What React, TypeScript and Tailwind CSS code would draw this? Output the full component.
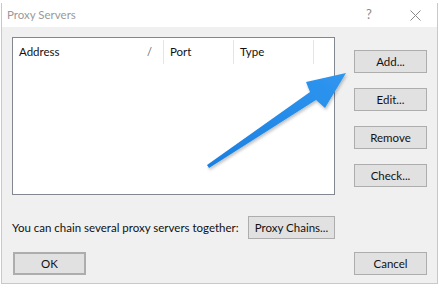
import React from "react"

const font = { fontFamily: 'Lato, "Noto Sans", sans-serif' }

const WinButton = ({
  label,
  className = "",
}: {
  label: string
  className?: string
}) => (
  <div
    className={`h-[23px] flex items-center justify-center bg-[#e1e1e1] border border-[#adadad] text-[11.5px] text-[#111] whitespace-nowrap ${className}`}
  >
    {label}
  </div>
)

const Arrow = () => (
  <svg
    className="absolute inset-0 pointer-events-none"
    width={439}
    height={288}
    viewBox="0 0 439 288"
  >
    <defs>
      <linearGradient id="arrowFill" x1="0" y1="1" x2="1" y2="0">
        <stop offset="0" stopColor="#1b7fe0" />
        <stop offset="1" stopColor="#2f96f0" />
      </linearGradient>
      <filter id="arrowShadow" x="-20%" y="-20%" width="140%" height="140%">
        <feDropShadow dx="1" dy="2" stdDeviation="1.5" floodColor="#000" floodOpacity="0.25" />
      </filter>
    </defs>
    <polygon
      points="207,165 310,92 306,82 346,73 325,108 316,100 209,168"
      fill="url(#arrowFill)"
      filter="url(#arrowShadow)"
    />
  </svg>
)

export default function App() {
  return (
    <div className="relative w-[439px] h-[288px] bg-white overflow-hidden" style={font}>
      <div className="h-[3px]" />
      <div className="mx-[1px] w-[437px] border border-t-0 border-[#c8c8c8] flex flex-col">
        {/* title bar */}
        <div className="h-[24px] bg-white flex items-center pl-[5px] text-[11.5px] text-[#9a9a9a]">
          <span className="flex-1">Proxy Servers</span>
          <span className="w-[10px] text-[13px] text-[#8a8a8a] mr-[34px]">?</span>
          <svg width="11" height="11" viewBox="0 0 11 11" className="mr-[16px]">
            <path d="M0.5 0.5 L10.5 10.5 M10.5 0.5 L0.5 10.5" stroke="#8a8a8a" strokeWidth="1" />
          </svg>
        </div>

        {/* body */}
        <div className="bg-[#f0f0f0] px-[10px] pt-[10px] pb-[8px] flex flex-col">
          <div className="flex justify-between">
            <div className="w-[323px] h-[158px] bg-white border border-[#828790]">
              <div className="flex h-[26px] pt-[2px] text-[11.5px] text-[#111]">
                <div className="w-[151px] flex items-center justify-between pl-[6px] pr-[11px] border-r border-[#e5e5e5]">
                  <span>Address</span>
                  <span className="text-[#666] text-[11px]">/</span>
                </div>
                <div className="w-[70px] flex items-center pl-[6px] border-r border-[#e5e5e5]">
                  Port
                </div>
                <div className="w-[80px] flex items-center pl-[6px] border-r border-[#e5e5e5]">
                  Type
                </div>
              </div>
            </div>
            <div className="w-[73px] pt-[13px] flex flex-col gap-[15px]">
              <WinButton label="Add..." />
              <WinButton label="Edit..." />
              <WinButton label="Remove" />
              <WinButton label="Check..." />
            </div>
          </div>

          <div className="mt-[21px] flex items-center">
            <span className="w-[236px] text-[11.5px] text-[#111] whitespace-nowrap">
              You can chain several proxy servers together:
            </span>
            <WinButton label="Proxy Chains..." className="w-[87px]" />
          </div>

          <div className="mt-[13px] flex justify-between">
            <WinButton label="OK" className="w-[73px] border-2 border-[#0078d7] ml-[1px]" />
            <WinButton label="Cancel" className="w-[73px]" />
          </div>
        </div>
      </div>
      <Arrow />
    </div>
  )
}
